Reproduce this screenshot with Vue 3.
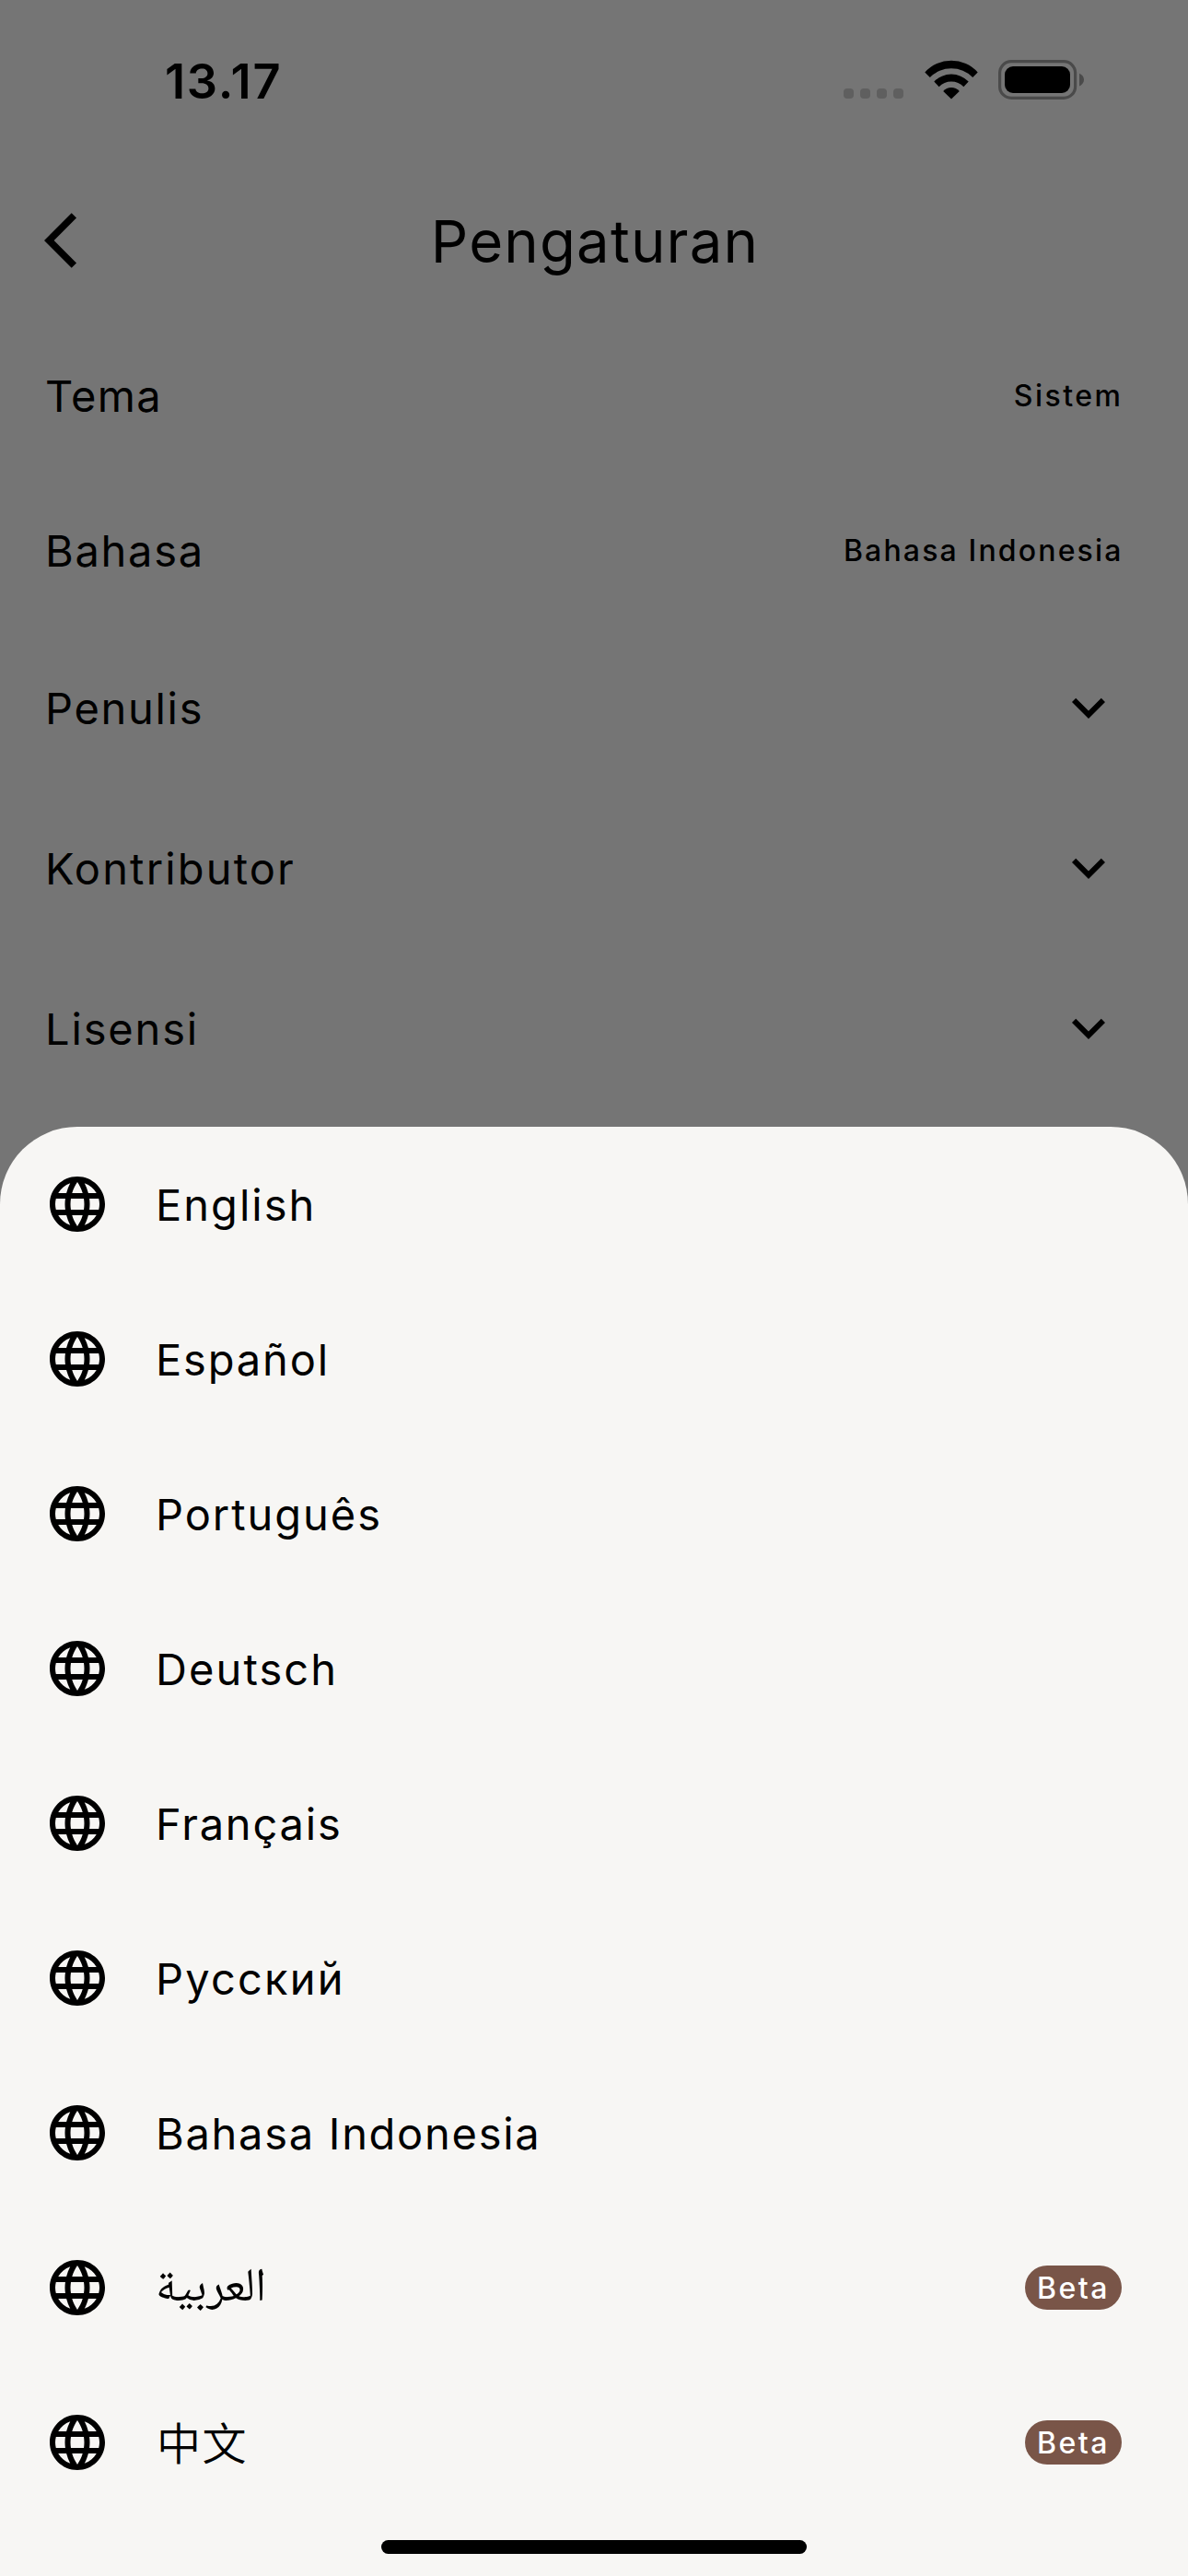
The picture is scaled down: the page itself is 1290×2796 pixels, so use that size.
<script setup>
const settings = [
  { label: 'Tema', value: 'Sistem', tracking: 1.3, valueTracking: 2.5 },
  { label: 'Bahasa', value: 'Bahasa Indonesia', tracking: 1.7, valueTracking: 2.15 },
  { label: 'Penulis', tracking: 1.7 },
  { label: 'Kontributor', tracking: 2.15 },
  { label: 'Lisensi', tracking: 1.85 },
]

const languages = [
  { name: 'English', lang: 'en', tracking: 2.03 },
  { name: 'Español', lang: 'es', tracking: 1.85 },
  { name: 'Português', lang: 'pt', tracking: 1.95 },
  { name: 'Deutsch', lang: 'de', tracking: 2.1 },
  { name: 'Français', lang: 'fr', tracking: 1.8 },
  { name: 'Русский', lang: 'ru', tracking: 2.2 },
  { name: 'Bahasa Indonesia', lang: 'id', tracking: 1.72 },
  { name: 'العربية', lang: 'ar', tracking: 0, beta: true },
  { name: '中文', lang: 'zh', tracking: 1.5, beta: true },
]
</script>

<template>
  <div class="screen">
    <header class="status">
      <span class="time">13.17</span>
      <div class="indicators">
        <span class="cell"><i v-for="n in 4" :key="n"></i></span>
        <svg class="wifi" width="58" height="43" viewBox="-29 -42.5 58 43">
          <path d="M-28.7 -29A38.5 38.5 0 0 1 28.7 -29L23.2 -23.6A33 33 0 0 0 -23.2 -23.6Z" />
          <path d="M-18.7 -19A26 26 0 0 1 18.7 -19L13.4 -13.3A18.5 18.5 0 0 0 -13.4 -13.3Z" />
          <path d="M-8.8 -8.6A12 12 0 0 1 8.8 -8.6L0 0Z" />
        </svg>
        <svg class="battery" width="94" height="43" viewBox="0 0 94 43">
          <rect class="shell" x="1.6" y="1.6" width="82" height="39.8" rx="12.5" />
          <rect x="7" y="7" width="71" height="29" rx="9" />
          <path class="tip" d="M88 14.8c3.2 1.2 5 3.8 5 6.8s-1.8 5.6-5 6.8Z" />
        </svg>
      </div>
    </header>

    <nav class="appbar">
      <svg class="back" width="72" height="72" viewBox="0 0 24 24">
        <path d="M11.67 3.87L9.9 2.1 0 12l9.9 9.9 1.77-1.77L3.54 12z" />
      </svg>
      <h1>Pengaturan</h1>
    </nav>

    <section class="settings">
      <div v-for="s in settings" :key="s.label" class="setting" :class="{ expandable: !s.value }">
        <span class="label" :style="{ letterSpacing: s.tracking + 'px' }">{{ s.label }}</span>
        <span v-if="s.value" class="value" :style="{ letterSpacing: s.valueTracking + 'px' }">{{ s.value }}</span>
        <svg v-else width="72" height="72" viewBox="0 0 24 24">
          <path d="M16.59 8.59L12 13.17 7.41 8.59 6 10l6 6 6-6z" />
        </svg>
      </div>
    </section>

    <section class="sheet">
      <div v-for="l in languages" :key="l.lang" class="language">
        <svg width="72" height="72" viewBox="0 0 24 24">
          <path d="M11.99 2C6.47 2 2 6.48 2 12s4.47 10 9.99 10C17.52 22 22 17.52 22 12S17.52 2 11.99 2zm6.93 6h-2.95c-.32-1.25-.78-2.45-1.38-3.56 1.84.63 3.37 1.91 4.33 3.56zM12 4.04c.83 1.2 1.48 2.53 1.91 3.96h-3.82c.43-1.43 1.08-2.76 1.91-3.96zM4.26 14C4.1 13.36 4 12.69 4 12s.1-1.36.26-2h3.38c-.08.66-.14 1.32-.14 2s.06 1.34.14 2H4.26zm.82 2h2.95c.32 1.25.78 2.45 1.38 3.56-1.84-.63-3.37-1.9-4.33-3.56zm2.95-8H5.08c.96-1.66 2.49-2.93 4.33-3.56C8.81 5.55 8.35 6.75 8.03 8zM12 19.96c-.83-1.2-1.48-2.53-1.91-3.96h3.82c-.43 1.43-1.08 2.76-1.91 3.96zM14.34 14H9.66c-.09-.66-.16-1.32-.16-2s.07-1.35.16-2h4.68c.09.65.16 1.32.16 2s-.07 1.34-.16 2zm.25 5.56c.6-1.11 1.06-2.31 1.38-3.56h2.95c-.96 1.65-2.49 2.93-4.33 3.56zM16.36 14c.08-.66.14-1.32.14-2s-.06-1.34-.14-2h3.38c.16.64.26 1.31.26 2s-.1 1.36-.26 2h-3.38z" />
        </svg>
        <span class="name" :lang="l.lang" :class="l.lang" :style="{ letterSpacing: l.tracking + 'px' }">{{ l.name }}</span>
        <span v-if="l.beta" class="beta">Beta</span>
      </div>
      <div class="home"><span></span></div>
    </section>
  </div>
</template>

<style>
body {
  margin: 0;
}
</style>

<style scoped>
.screen {
  width: 1290px;
  height: 2796px;
  display: flex;
  flex-direction: column;
  overflow: hidden;
  background: #757575;
  color: #000;
  font-family: Inter, 'Noto Sans CJK SC', sans-serif;
}
.status {
  box-sizing: border-box;
  flex: none;
  height: 177px;
  padding: 64px 112px 0 179px;
  display: flex;
  justify-content: space-between;
  align-items: flex-start;
}
.time {
  font-size: 52.3px;
  font-weight: 600;
  line-height: 48px;
  letter-spacing: 1.75px;
}
.indicators {
  display: flex;
  align-items: flex-start;
  padding-top: 1px;
}
.cell {
  display: flex;
  gap: 7px;
  margin: 31px 23px 0 0;
}
.cell i {
  width: 11px;
  height: 11px;
  border-radius: 4px;
  background: #5f5f5f;
}
.wifi {
  margin-right: 22.5px;
}
.shell {
  fill: none;
  stroke: #4a4a4a;
  stroke-width: 3.2px;
}
.tip {
  fill: #4a4a4a;
}
.appbar {
  flex: none;
  height: 168px;
  padding: 0 48px;
  display: grid;
  grid-template-columns: 72px 1fr 72px;
  align-items: center;
}
h1 {
  margin: 0;
  padding: 2px 0 0 2px;
  text-align: center;
  font-size: 63.4px;
  font-weight: 400;
  line-height: 80px;
  letter-spacing: 1.22px;
}
.settings {
  height: 878px;
  flex: none;
  display: flex;
  flex-direction: column;
}
.setting {
  flex: none;
  height: 168px;
  padding: 0 72px 0 49px;
  display: flex;
  align-items: center;
  justify-content: space-between;
}
.setting.expandable {
  height: 174px;
}
.label,
.name {
  padding-top: 2px;
  font-size: 47px;
  line-height: 60px;
  white-space: nowrap;
}
.value {
  margin-right: -1.5px;
  padding-top: 2px;
  font-size: 32px;
  font-weight: 450;
  line-height: 40px;
}
.sheet {
  height: 1573px;
  flex: none;
  display: flex;
  flex-direction: column;
  background: #f7f6f4;
  border-radius: 84px 84px 0 0;
}
.language {
  flex: none;
  height: 168px;
  padding: 0 72px 0 48px;
  display: flex;
  align-items: center;
  gap: 49px;
}
.name.ar {
  padding-top: 6px;
  font-family: 'Noto Naskh Arabic', FreeSerif, 'DejaVu Sans', sans-serif;
  font-size: 51px;
}
.name.zh {
  padding: 0 0 5px 1px;
  font-family: 'Noto Sans CJK SC', sans-serif;
  font-size: 48px;
  font-weight: 350;
}
.beta {
  box-sizing: border-box;
  margin-left: auto;
  width: 105px;
  height: 48px;
  border-radius: 24px;
  padding: 1px 0 0 13px;
  background: #795548;
  color: #fff;
  font-size: 32px;
  font-weight: 450;
  line-height: 48px;
  letter-spacing: 2.5px;
}
.home {
  display: flex;
  justify-content: center;
  padding-top: 22px;
}
.home span {
  width: 462px;
  height: 15px;
  border-radius: 7.5px;
  background: #000;
}
</style>
